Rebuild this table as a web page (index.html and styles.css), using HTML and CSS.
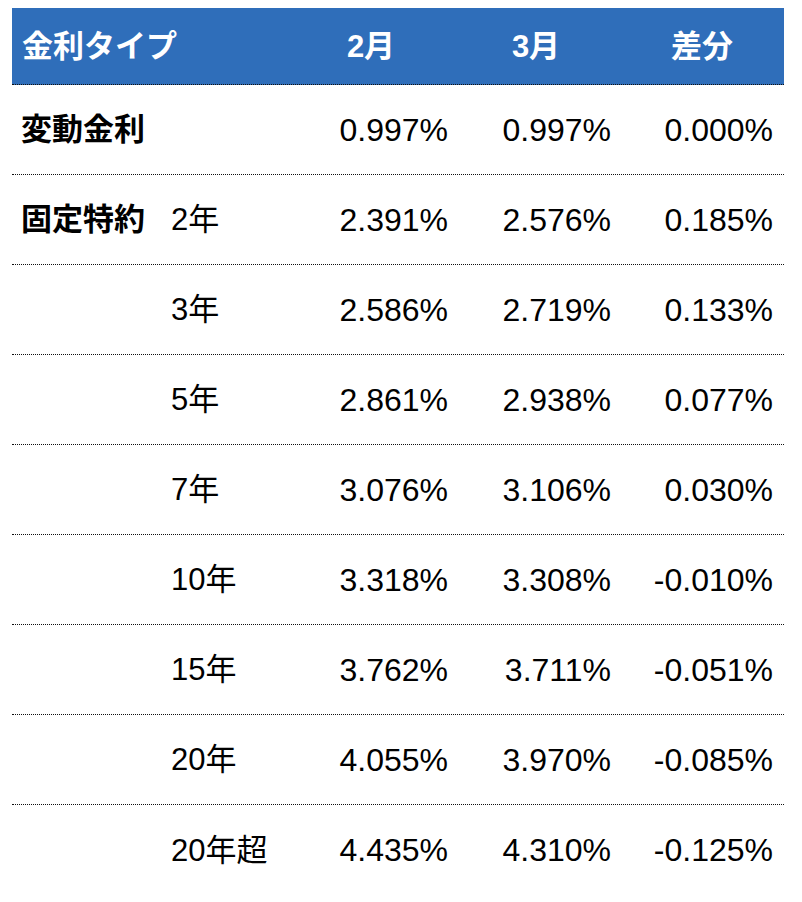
FILE: index.html
```html
<!DOCTYPE html>
<html lang="ja">
<head>
<meta charset="utf-8">
<title>金利</title>
<link rel="stylesheet" href="styles.css">
</head>
<body>
<div class="rate-table">
  <div class="row head">
    <div class="cell type">金利タイプ</div>
    <div class="cell mon">2月</div>
    <div class="cell mon">3月</div>
    <div class="cell mon">差分</div>
  </div>
  <div class="row">
    <div class="cell cat">変動金利</div>
    <div class="cell term"></div>
    <div class="cell val v1">0.997%</div>
    <div class="cell val v2">0.997%</div>
    <div class="cell val v3">0.000%</div>
  </div>
  <div class="row">
    <div class="cell cat">固定特約</div>
    <div class="cell term">2年</div>
    <div class="cell val v1">2.391%</div>
    <div class="cell val v2">2.576%</div>
    <div class="cell val v3">0.185%</div>
  </div>
  <div class="row">
    <div class="cell cat"></div>
    <div class="cell term">3年</div>
    <div class="cell val v1">2.586%</div>
    <div class="cell val v2">2.719%</div>
    <div class="cell val v3">0.133%</div>
  </div>
  <div class="row">
    <div class="cell cat"></div>
    <div class="cell term">5年</div>
    <div class="cell val v1">2.861%</div>
    <div class="cell val v2">2.938%</div>
    <div class="cell val v3">0.077%</div>
  </div>
  <div class="row">
    <div class="cell cat"></div>
    <div class="cell term">7年</div>
    <div class="cell val v1">3.076%</div>
    <div class="cell val v2">3.106%</div>
    <div class="cell val v3">0.030%</div>
  </div>
  <div class="row">
    <div class="cell cat"></div>
    <div class="cell term">10年</div>
    <div class="cell val v1">3.318%</div>
    <div class="cell val v2">3.308%</div>
    <div class="cell val v3">-0.010%</div>
  </div>
  <div class="row">
    <div class="cell cat"></div>
    <div class="cell term">15年</div>
    <div class="cell val v1">3.762%</div>
    <div class="cell val v2">3.711%</div>
    <div class="cell val v3">-0.051%</div>
  </div>
  <div class="row">
    <div class="cell cat"></div>
    <div class="cell term">20年</div>
    <div class="cell val v1">4.055%</div>
    <div class="cell val v2">3.970%</div>
    <div class="cell val v3">-0.085%</div>
  </div>
  <div class="row last">
    <div class="cell cat"></div>
    <div class="cell term">20年超</div>
    <div class="cell val v1">4.435%</div>
    <div class="cell val v2">4.310%</div>
    <div class="cell val v3">-0.125%</div>
  </div>
</div>
</body>
</html>
```

FILE: styles.css
```css
html, body {
  margin: 0;
  padding: 0;
  background: #ffffff;
}

body {
  padding: 8px 0 0 12px;
  font-family: "Liberation Sans", "Noto Sans CJK JP", sans-serif;
  font-size: 31px;
  color: #000000;
}

.rate-table {
  width: 772px;
  display: flex;
  flex-direction: column;
}

.row {
  display: grid;
  grid-template-columns: 148px 130px 162px 168px 164px;
  height: 90px;
  align-items: center;
  border-bottom: 1px dotted #111111;
  box-sizing: border-box;
}

.row.head {
  height: 77px;
  background: #2f6eba;
  color: #ffffff;
  font-weight: bold;
}

.row.last {
  border-bottom: none;
}

.cell {
  white-space: nowrap;
  line-height: 1;
}

.type {
  grid-column: 1 / span 2;
  padding-left: 10px;
}

.mon {
  text-align: center;
}

.cat {
  font-weight: bold;
  padding-left: 9px;
}

.term {
  padding-left: 11px;
}

.val {
  text-align: right;
  font-size: 32px;
}

.v1 { padding-right: 4px; }
.v2 { padding-right: 9px; }
.v3 { padding-right: 11px; }
```
